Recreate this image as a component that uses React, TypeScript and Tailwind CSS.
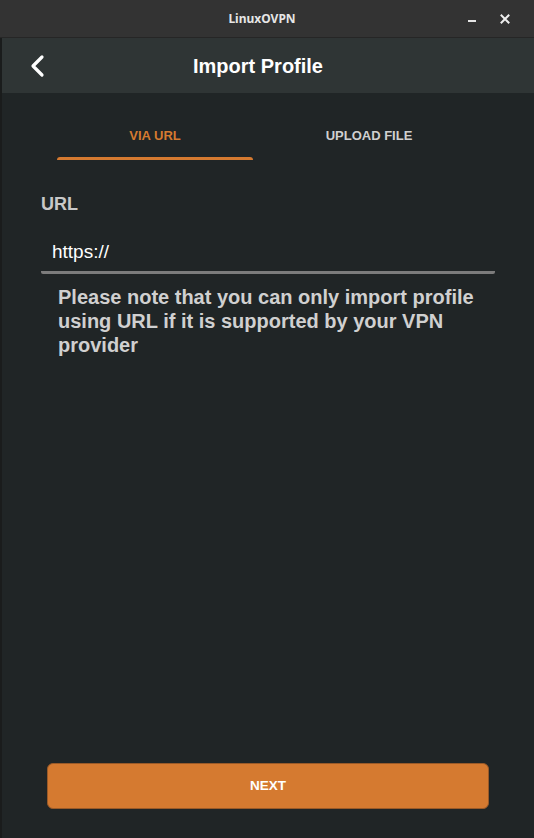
import React, { useState } from 'react'

const font = { fontFamily: '"Liberation Sans", Arial, sans-serif' }

const TitleBar = () => (
  <div className="relative flex h-[38px] items-center justify-center border-b border-[#262626] bg-[#333333] pr-[10px]">
    <span className="text-[12px] font-bold text-[#e6e6e6]" style={{ fontFamily: '"Noto Sans", sans-serif' }}>LinuxOVPN</span>
    <div className="absolute right-[24px] top-0 flex h-full items-center gap-[24px]">
      <span className="mt-[5px] block h-[2px] w-[8px] bg-[#e6e6e6]" />
      <svg width="10" height="10" viewBox="0 0 10 10">
        <path d="M1.5 1.5 L8.5 8.5 M8.5 1.5 L1.5 8.5" stroke="#eeeeee" strokeWidth="2" strokeLinecap="square" />
      </svg>
    </div>
  </div>
)

export default function App() {
  const [tab, setTab] = useState<'url' | 'file'>('url')
  const [url, setUrl] = useState('https://')

  return (
    <div className="flex h-[838px] w-[534px] flex-col overflow-hidden bg-[#202526]" style={font}>
      <TitleBar />
      <div className="flex min-w-0 flex-1 flex-col border-l-2 border-[#1a1c1c]">
        <div className="relative flex h-[55px] items-center justify-center bg-[#2f3535] pr-[20px]">
          <button className="absolute left-[26px] top-[16px]">
            <svg width="20" height="24" viewBox="0 0 20 24">
              <path d="M14 3 L5 12 L14 21" fill="none" stroke="#ffffff" strokeWidth="3.2" strokeLinecap="round" strokeLinejoin="round" />
            </svg>
          </button>
          <span className="text-[20px] font-bold text-white">Import Profile</span>
        </div>

        <div className="flex pl-[55px] pt-[28px]">
          <button onClick={() => setTab('url')} className="flex w-[196px] shrink-0 flex-col items-center">
            <span className={`h-[30px] text-[13px] font-bold leading-[30px] ${tab === 'url' ? 'text-[#d57a30]' : 'text-[#d0d0d0]'}`}>VIA URL</span>
            <span className={`mt-[6px] h-[3px] w-full rounded-t-[3px] ${tab === 'url' ? 'bg-[#d57a30]' : 'bg-transparent'}`} />
          </button>
          <button onClick={() => setTab('file')} className="flex w-[232px] shrink-0 flex-col items-center">
            <span className={`h-[30px] text-[13px] font-bold leading-[30px] ${tab === 'file' ? 'text-[#d57a30]' : 'text-[#d0d0d0]'}`}>UPLOAD FILE</span>
            <span className={`mt-[6px] h-[3px] w-full rounded-t-[3px] ${tab === 'file' ? 'bg-[#d57a30]' : 'bg-transparent'}`} />
          </button>
        </div>

        <div className="flex flex-col px-[39px] pt-[32px]">
          <label className="text-[18px] font-bold leading-[24px] text-[#c8c8c8]">URL</label>
          <div className="mt-[23px] rounded-b-[2px] border-b-[3px] border-[#7c7c7c]">
            <input
              value={url}
              onChange={(e) => setUrl(e.target.value)}
              className="h-[32px] w-full min-w-0 bg-transparent px-[11px] pb-[7px] text-[19px] text-white outline-none"
              style={font}
            />
          </div>
          <p className="mt-[11px] pl-[17px] pr-[8px] text-[20px] font-bold leading-[24px] text-[#d0d0d0]">
            Please note that you can only import profile using URL if it is supported by your VPN provider
          </p>
        </div>

        <div className="flex-1" />

        <div className="px-[45px] pb-[29px]">
          <button className="flex h-[46px] w-full items-center justify-center rounded-[6px] border border-[#9a5a28] bg-[#d57a30] text-[13.5px] font-bold text-white">
            NEXT
          </button>
        </div>
      </div>
    </div>
  )
}
